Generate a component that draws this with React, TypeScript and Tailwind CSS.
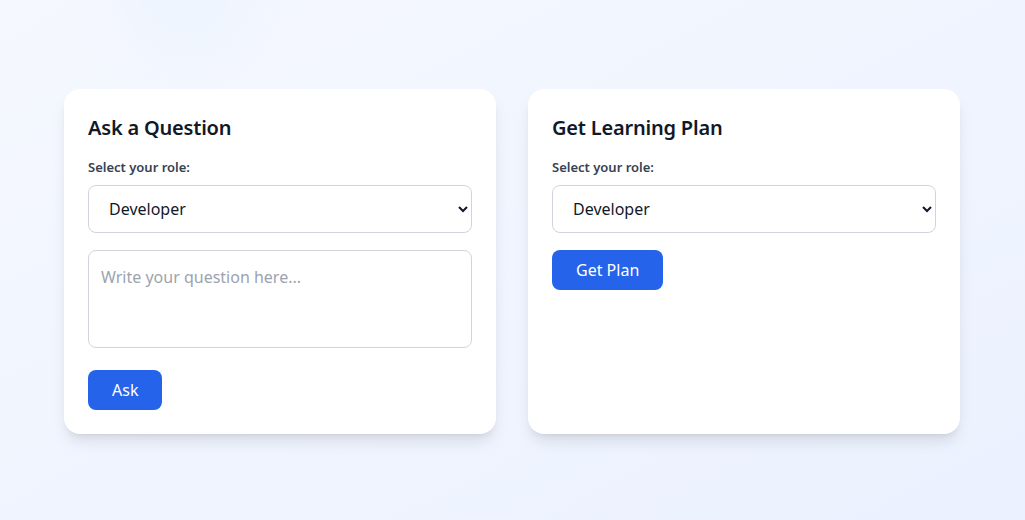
import React from "react";

function RoleSelect() {
  return (
    <select
      defaultValue="Developer"
      className="w-full h-12 px-4 rounded-lg border border-[#d1d5db] bg-white text-base text-[#111827] outline-none"
    >
      <option>Developer</option>
      <option>Designer</option>
      <option>Manager</option>
    </select>
  );
}

export default function App() {
  return (
    <div
      className="relative min-h-screen flex items-center justify-center pr-px bg-gradient-to-br from-[#f5f8fe] to-[#ebf1fe] overflow-hidden"
      style={{ fontFamily: '"Noto Sans", "Open Sans", sans-serif' }}
    >
      <div className="absolute -top-24 left-[120px] w-[130px] h-[150px] rounded-full bg-[#eef4fe] blur-xl" />
      <div className="relative w-full max-w-4xl grid grid-cols-2 gap-8 pt-[3px]">
        <div className="bg-white rounded-2xl shadow-lg p-6 flex flex-col">
          <h2 className="text-xl leading-[30px] font-semibold text-[#111827] mb-[14px] tracking-[-0.01em]">Ask a Question</h2>
          <label className="block text-[13px] leading-5 font-semibold text-[#374151] mb-2">Select your role:</label>
          <RoleSelect />
          <textarea
            placeholder="Write your question here..."
            className="mt-[17px] block w-full h-[98px] px-3 pt-[14px] pb-3 rounded-lg border border-[#d1d5db] text-base text-[#111827] placeholder:text-[#9ca3af] resize-none outline-none"
          />
          <div className="mt-[22px]">
            <button className="h-10 px-6 rounded-lg bg-[#2563eb] text-white text-base">Ask</button>
          </div>
        </div>
        <div className="bg-white rounded-2xl shadow-lg p-6 flex flex-col">
          <h2 className="text-xl leading-[30px] font-semibold text-[#111827] mb-[14px] tracking-[-0.01em]">Get Learning Plan</h2>
          <label className="block text-[13px] leading-5 font-semibold text-[#374151] mb-2">Select your role:</label>
          <RoleSelect />
          <div className="mt-[17px]">
            <button className="h-10 px-6 rounded-lg bg-[#2563eb] text-white text-base">Get Plan</button>
          </div>
        </div>
      </div>
    </div>
  );
}
